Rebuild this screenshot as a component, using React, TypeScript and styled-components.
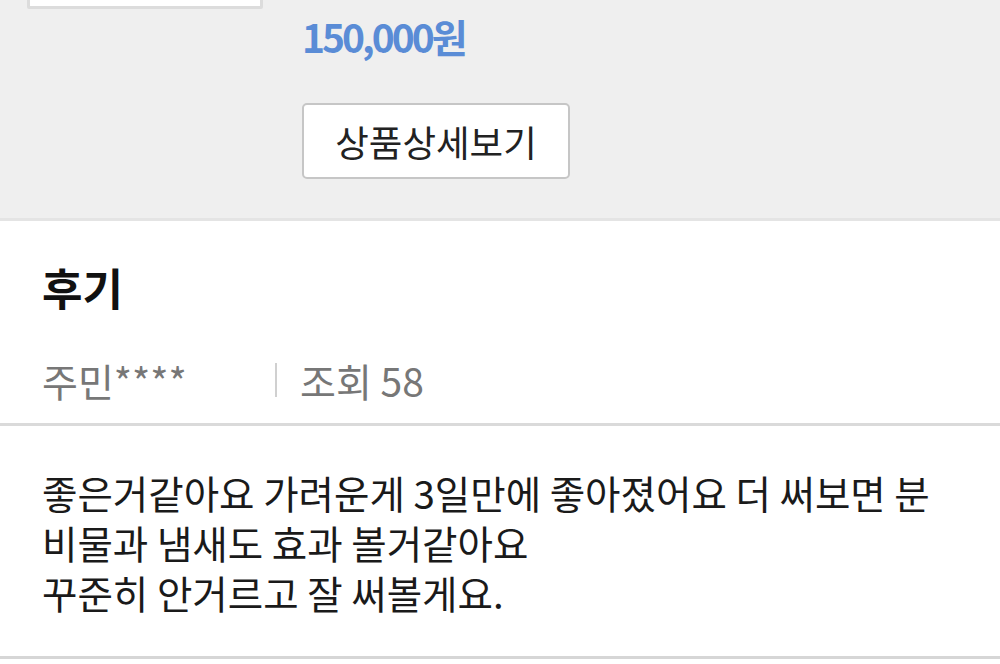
import React from 'react';
import styled, { createGlobalStyle } from 'styled-components';

const GlobalStyle = createGlobalStyle`
  html, body {
    margin: 0;
    padding: 0;
    background: #ffffff;
    overflow: hidden;
  }
  body {
    font-family: "Noto Sans CJK KR", "Noto Sans", sans-serif;
  }
`;

const Page = styled.div`
  width: 1000px;
  height: 664px;
  overflow: hidden;
  background: #ffffff;
`;

const ProductSection = styled.section`
  display: flex;
  align-items: flex-start;
  gap: 39px;
  padding: 0 0 39px 27px;
  background: #efefef;
  border-bottom: 3px solid #e4e4e4;
`;

const Thumb = styled.div`
  flex: none;
  width: 230px;
  height: 230px;
  margin-top: -227px;
  background: #ffffff;
  border: 3px solid #dcdcdc;
  border-radius: 2px;
`;

const Info = styled.div`
  display: flex;
  flex-direction: column;
  align-items: flex-start;
  padding-top: 13px;
`;

const Price = styled.div`
  font-size: 39px;
  line-height: 46px;
  font-weight: 700;
  letter-spacing: -3px;
  color: #5a8cd6;
`;

const DetailButton = styled.button`
  margin-top: 44px;
  width: 268px;
  height: 76px;
  background: #ffffff;
  border: 2px solid #c6c6c6;
  border-radius: 5px;
  font-family: inherit;
  font-size: 36.5px;
  color: #222222;
  padding: 0;
`;

const ReviewHead = styled.section`
  padding: 42px 0 22px 42px;
  border-bottom: 3px solid #dadada;
`;

const Title = styled.h2`
  margin: 0;
  font-size: 44px;
  line-height: 48px;
  font-weight: 700;
  color: #111111;
`;

const Meta = styled.div`
  display: flex;
  align-items: center;
  margin-top: 48px;
  height: 42px;
  font-size: 39px;
  color: #777777;
`;

const Author = styled.span`
  width: 233px;
`;

const Divider = styled.span`
  width: 2px;
  height: 34px;
  background: #d0d0d0;
  margin-right: 23px;
`;

const Body = styled.p`
  margin: 0;
  padding: 41px 40px 39px 42px;
  font-size: 38.5px;
  line-height: 50px;
  color: #1a1a1a;
  word-break: break-all;
  border-bottom: 3px solid #d6d6d6;
`;

const review =
  '좋은거같아요 가려운게 3일만에 좋아졌어요 더 써보면 분비물과 냄새도 효과 볼거같아요';

const App: React.FC = () => {
  return (
    <Page>
      <GlobalStyle />
      <ProductSection>
        <Thumb />
        <Info>
          <Price>150,000원</Price>
          <DetailButton>상품상세보기</DetailButton>
        </Info>
      </ProductSection>
      <ReviewHead>
        <Title>후기</Title>
        <Meta>
          <Author>주민****</Author>
          <Divider />
          <span>조회 58</span>
        </Meta>
      </ReviewHead>
      <Body>
        {review}
        <br />
        꾸준히 안거르고 잘 써볼게요.
      </Body>
    </Page>
  );
};

export default App;
